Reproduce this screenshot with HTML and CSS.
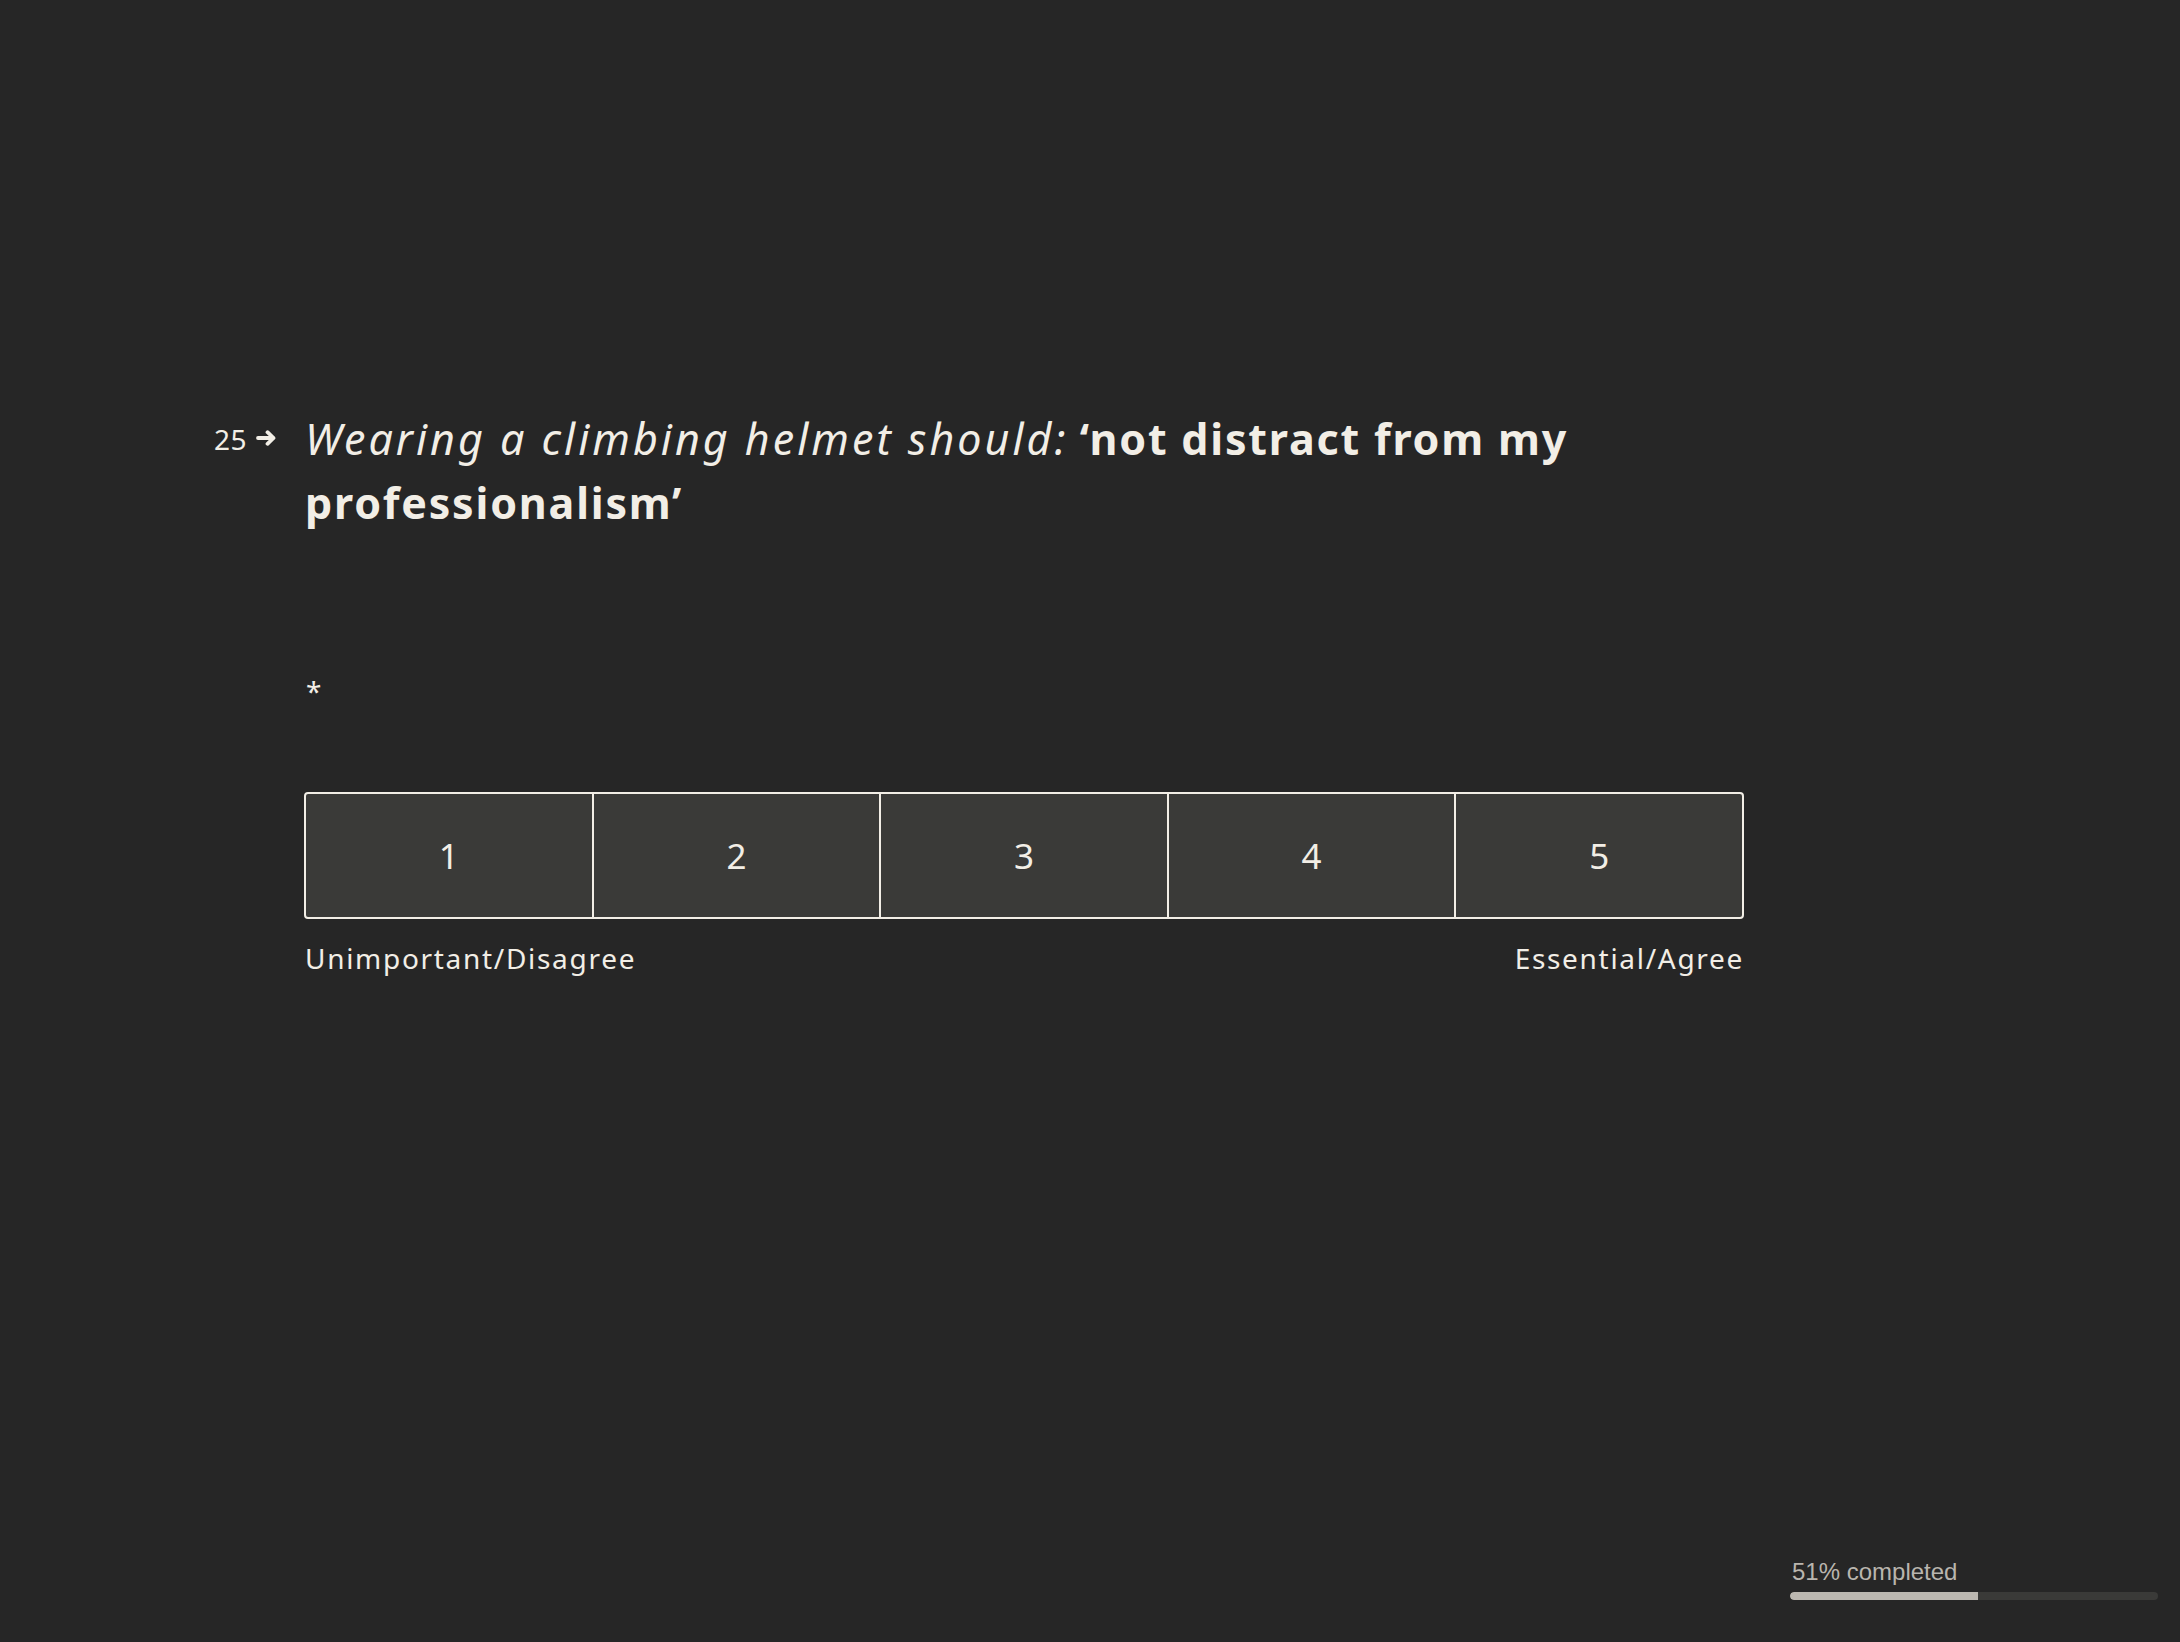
FILE: index.html
```html
<!DOCTYPE html>
<html lang="en">
<head>
<meta charset="utf-8">
<title>Question 25</title>
<link rel="stylesheet" href="styles.css">
</head>
<body>
<main class="main">
  <section class="question">
    <div class="qhead">
      <div class="qnum">
        <span class="qnum-text">25</span>
        <svg class="qarrow" width="20" height="16" viewBox="0 0 20 16" aria-hidden="true">
          <path d="M2 8H17.5M11.5 2.2L17.5 8L11.5 13.8" fill="none" stroke="#f2eee6" stroke-width="3.8" stroke-linecap="round" stroke-linejoin="round"/>
        </svg>
      </div>
      <h1 class="qtitle"><em class="qlead">Wearing a climbing helmet should:</em> <strong class="qbold">‘not distract from my professionalism’</strong></h1>
    </div>
    <div class="required">*</div>
    <div class="scale">
      <div class="cell">1</div>
      <div class="cell">2</div>
      <div class="cell">3</div>
      <div class="cell">4</div>
      <div class="cell">5</div>
    </div>
    <div class="labels">
      <span>Unimportant/Disagree</span>
      <span>Essential/Agree</span>
    </div>
  </section>
</main>
<div class="progress">
  <div class="progress-text">51% completed</div>
  <div class="progress-track"><div class="progress-fill" style="width:51%"></div></div>
</div>
</body>
</html>
```

FILE: styles.css
```css
html, body {
  margin: 0;
  padding: 0;
}
body {
  width: 2180px;
  height: 1642px;
  background: #262626;
  color: #f2eee6;
  font-family: "Noto Sans", "DejaVu Sans", sans-serif;
  overflow: hidden;
  position: relative;
}
.main {
  padding: 407px 0 0 304px;
}
.question {
  width: 1440px;
}
.qhead {
  display: flex;
  align-items: flex-start;
}
.qnum {
  display: flex;
  align-items: center;
  gap: 9px;
  width: 89px;
  margin-left: -89px;
  box-sizing: border-box;
  height: 64px;
  font-size: 28px;
  line-height: 64px;
  flex: none;
}
.qnum-text {
  margin-left: -1px;
  display: block;
  line-height: 64px;
  height: 64px;
  letter-spacing: 0.5px;
}
.qarrow {
  display: block;
  margin-top: -3px;
}
.qtitle {
  margin: 0;
  padding-left: 1px;
  font-size: 43px;
  line-height: 64px;
  font-weight: 400;
}
.qlead {
  font-style: italic;
  font-weight: 400;
  letter-spacing: 3px;
}
.qbold {
  font-weight: 700;
  letter-spacing: 1.8px;
}
.required {
  margin-top: 136px;
  padding-left: 2px;
  font-size: 28px;
  line-height: 40px;
  height: 40px;
}
.scale {
  margin-top: 81px;
  display: flex;
  height: 127px;
  box-sizing: border-box;
  border: 2px solid #f2eee6;
  border-radius: 4px;
  background: #3a3a38;
  overflow: hidden;
}
.cell {
  flex: 1 1 0;
  display: flex;
  align-items: center;
  justify-content: center;
  font-size: 35px;
  color: #f2eee6;
}
.cell + .cell {
  border-left: 2px solid #f2eee6;
}
.labels {
  margin-top: 19px;
  display: flex;
  justify-content: space-between;
  font-size: 28px;
  line-height: 40px;
  letter-spacing: 1.7px;
  padding-left: 1px;
}
.progress {
  position: absolute;
  right: 22px;
  bottom: 42px;
  width: 368px;
}
.progress-text {
  font-family: "Liberation Sans", Arial, sans-serif;
  font-size: 24px;
  line-height: 28px;
  color: #b9b5ae;
  padding-left: 2px;
  margin-bottom: 6px;
}
.progress-track {
  height: 8px;
  border-radius: 4px;
  background: #3a3a38;
  overflow: hidden;
}
.progress-fill {
  height: 100%;
  background: #bcb8b1;
  border-radius: 4px 0 0 4px;
}
```
